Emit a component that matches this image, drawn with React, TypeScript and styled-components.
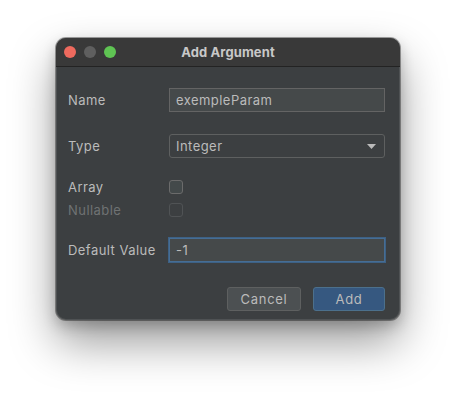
import React from "react";
import styled, { createGlobalStyle } from "styled-components";

const Global = createGlobalStyle`
  html, body { margin: 0; padding: 0; background: #ffffff; }
  body { font-family: Inter, "Noto Sans", "Liberation Sans", sans-serif; }
  * { box-sizing: border-box; }
`;

const Page = styled.div`
  width: 456px;
  height: 394px;
  padding: 38px 0 0 56px;
  background: #ffffff;
`;

const Window = styled.div`
  width: 344px;
  height: 282px;
  border-radius: 10px;
  background: #3c3f41;
  overflow: hidden;
  display: flex;
  flex-direction: column;
  box-shadow: 0 0 0 1px rgba(0, 0, 0, 0.35), inset 0 0 0 1px rgba(255, 255, 255, 0.1),
    0 22px 46px rgba(0, 0, 0, 0.4), 0 6px 14px rgba(0, 0, 0, 0.22);
`;

const TitleBar = styled.div`
  height: 29px;
  flex: none;
  background: #393939;
  border-bottom: 1px solid #232323;
  display: flex;
  align-items: center;
  padding-left: 8px;
  position: relative;
`;

const Lights = styled.div`
  display: flex;
  gap: 8px;
`;

const Light = styled.span<{ $c: string }>`
  width: 12px;
  height: 12px;
  border-radius: 50%;
  background: ${(p) => p.$c};
`;

const Title = styled.div`
  position: absolute;
  left: 0;
  right: 0;
  top: 0;
  bottom: 0;
  display: flex;
  align-items: center;
  justify-content: center;
  color: #c8c8c8;
  font-size: 13px;
  font-weight: 700;
  letter-spacing: 0.1px;
`;

const Body = styled.div`
  padding: 21px 15px 0 12px;
  display: flex;
  flex-direction: column;
`;

const Row = styled.div<{ $mt: number; $h: number }>`
  margin-top: ${(p) => p.$mt}px;
  height: ${(p) => p.$h}px;
  display: grid;
  grid-template-columns: 101px 1fr;
  align-items: center;
`;

const Label = styled.span<{ $disabled?: boolean }>`
  color: ${(p) => (p.$disabled ? "#6f7273" : "#bbbbbb")};
  font-size: 13px;
  letter-spacing: 0.45px;
`;

const Field = styled.div<{ $focus?: boolean }>`
  height: 24px;
  background: #45494a;
  border: 1px solid ${(p) => (p.$focus ? "#466d94" : "#646464")};
  box-shadow: ${(p) => (p.$focus ? "0 0 0 1px #3d6185" : "none")};
  display: flex;
  align-items: center;
  padding: 0 6px;
  color: #bbbbbb;
  font-size: 13px;
  letter-spacing: 0.45px;
`;

const Select = styled(Field)`
  background: #3c3f41;
  border-radius: 3px;
  border-color: #5e6060;
  justify-content: space-between;
  padding-right: 8px;
`;

const Check = styled.span<{ $disabled?: boolean }>`
  width: 14px;
  height: 14px;
  border-radius: 3px;
  border: 1px solid ${(p) => (p.$disabled ? "#505355" : "#6b6b6b")};
  background: ${(p) => (p.$disabled ? "#3c3f41" : "#43494a")};
`;

const Buttons = styled.div`
  margin-top: 25px;
  display: flex;
  justify-content: flex-end;
  gap: 12px;
`;

const Button = styled.button<{ $primary?: boolean }>`
  height: 24px;
  width: ${(p) => (p.$primary ? 72 : 74)}px;
  border-radius: 3px;
  border: 1px solid ${(p) => (p.$primary ? "#4c708c" : "#5e6060")};
  background: ${(p) => (p.$primary ? "#365880" : "#4c5052")};
  color: #bbbbbb;
  font-family: inherit;
  font-size: 13px;
  letter-spacing: 0.7px;
  padding: 0;
`;

export default function App() {
  return (
    <>
      <Global />
      <Page>
        <Window>
          <TitleBar>
            <Lights>
              <Light $c="#ee6a5e" />
              <Light $c="#5f5f5f" />
              <Light $c="#5fc453" />
            </Lights>
            <Title>Add Argument</Title>
          </TitleBar>
          <Body>
            <Row $mt={0} $h={24}>
              <Label>Name</Label>
              <Field>exempleParam</Field>
            </Row>
            <Row $mt={22} $h={24}>
              <Label>Type</Label>
              <Select>
                <span>Integer</span>
                <svg width="9" height="5" viewBox="0 0 9 5">
                  <path d="M0 0 H9 L4.5 5 Z" fill="#bbbbbb" />
                </svg>
              </Select>
            </Row>
            <Row $mt={21} $h={14}>
              <Label>Array</Label>
              <Check />
            </Row>
            <Row $mt={9} $h={14}>
              <Label $disabled>Nullable</Label>
              <Check $disabled />
            </Row>
            <Row $mt={22} $h={24}>
              <Label>Default Value</Label>
              <Field $focus>-1</Field>
            </Row>
            <Buttons>
              <Button>Cancel</Button>
              <Button $primary>Add</Button>
            </Buttons>
          </Body>
        </Window>
      </Page>
    </>
  );
}
